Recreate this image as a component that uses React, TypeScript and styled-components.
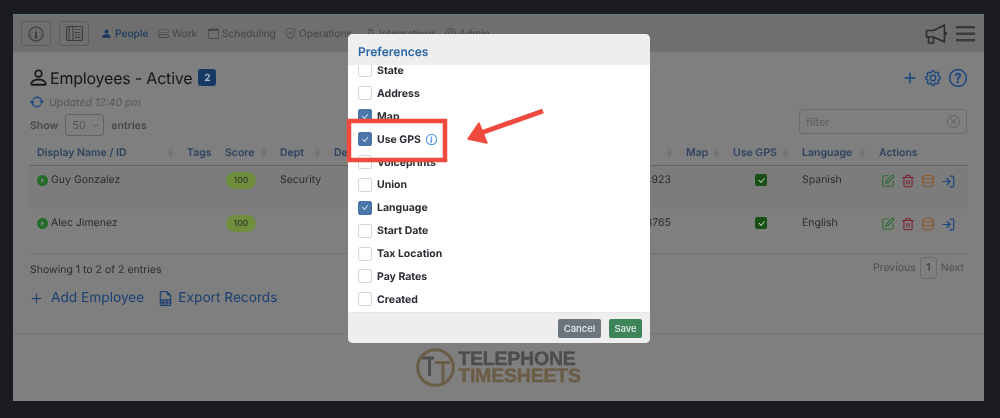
import React from "react";
import styled, { createGlobalStyle } from "styled-components";
import {
  BsPersonFill, BsPerson, BsHddStack, BsCalendar, BsShieldCheck, BsPlug, BsGear, BsArrowRepeat,
  BsPlusLg, BsQuestionCircle, BsPlayCircleFill, BsFileEarmarkSpreadsheet, BsInfoCircle, BsXCircle,
  BsCheck, BsCheckLg, BsChevronDown,
} from "react-icons/bs";
import { SquarePen, Trash2, Database, LogIn } from "lucide-react";

const Global = createGlobalStyle`
  html, body { margin: 0; padding: 0; background: #1b1c1f; }
  body { font-family: Inter, "Liberation Sans", sans-serif; text-rendering: geometricPrecision; }
  * { box-sizing: border-box; }
  #root { filter: blur(0.35px); }
`;

const Screen = styled.div`
  width: 1000px; height: 418px; background: #1b1c1f;
  padding: 14px 16px 17px 13px; overflow: hidden;
`;
const Window = styled.div`
  position: relative; height: 387px; background: #7f7f7f;
  border-top: 1px solid #5f7f7c; display: flex; flex-direction: column;
`;
const TopBar = styled.header`
  height: 37px; flex: none; background: #6f6f6f; display: flex; align-items: center; padding: 0 9px 0 8px;
`;
const SquareButton = styled.button`
  width: 30px; height: 25px; margin-right: 8px; padding: 0; background: transparent;
  border: 1px solid #5c5c5c; border-radius: 3px; color: #3c3c3c;
  display: flex; align-items: center; justify-content: center;
`;
const NavItem = styled.a<{ $active?: boolean; $w: number }>`
  width: ${(p) => p.$w}px; flex: none; display: flex; align-items: center; gap: 3px; white-space: nowrap;
  font-size: 10.2px; color: ${(p) => (p.$active ? "#17395f" : "#444444")}; font-weight: ${(p) => (p.$active ? 500 : 400)};
  svg { font-size: 11px; flex: none; }
`;
const Nav = styled.nav`display: flex; margin-left: 4px;`;
const TopRight = styled.div`
  margin-left: auto; display: flex; align-items: center; gap: 9px; color: #2d2d2d;
`;
const Content = styled.main`
  height: 282px; flex: none; padding: 14px 17px 0; border-bottom: 1px solid #737373;
`;
const Summary = styled.section`display: flex; justify-content: space-between; height: 73px;`;
const SummaryLeft = styled.div`display: flex; flex-direction: column;`;
const SummaryRight = styled.div`display: flex; flex-direction: column; align-items: flex-end; gap: 19px;`;
const TitleRow = styled.div`display: flex; align-items: center; height: 23px; color: #161616; svg { margin-left: -2px; stroke: currentColor; stroke-width: 0.3; }`;
const Title = styled.h1`margin: 0 6px 0 1px; font-size: 16px; font-weight: 400; white-space: nowrap; letter-spacing: -0.2px;`;
const Count = styled.span`
  width: 18px; height: 17px; background: #163a63; color: #aeb8c4; border-radius: 3px;
  font-size: 10px; font-weight: 700; display: flex; align-items: center; justify-content: center;
`;
const Updated = styled.div`
  margin-top: 3px; height: 20px; display: flex; align-items: center; gap: 5px; color: #555;
  font-size: 10.5px; font-style: italic; svg { color: #1a4682; font-size: 14px; stroke: currentColor; stroke-width: 0.4; }
`;
const ShowRow = styled.div`
  margin-top: 2px; height: 22px; display: flex; align-items: center; gap: 7px;
  font-size: 10.5px; font-weight: 600; color: #484848;
`;
const Select = styled.div`
  width: 39px; height: 22px; border: 1px solid #626262; border-radius: 3px; display: flex;
  align-items: center; justify-content: space-between; padding: 0 4px 0 6px; color: #555; font-weight: 400; font-size: 11px;
  svg { font-size: 7px; color: #444; }
`;
const ActionIcons = styled.div`
  height: 24px; display: flex; align-items: center; gap: 8px; color: #1a4682;
  svg { stroke: currentColor; stroke-width: 0.4; }
  svg:first-child { stroke-width: 0.8; }
`;
const Filter = styled.div`
  width: 168px; height: 25px; border: 1px solid #6b6b6b; border-radius: 3px; display: flex;
  align-items: center; justify-content: space-between; padding: 0 6px; font-size: 11px; color: #5c5c5c;
  svg { font-size: 13px; color: #5d5d5d; }
`;
const columns = "150px 38px 55px 54px 293px 59px 47px 69px 77px 95px";
const HeadRow = styled.div`
  display: grid; grid-template-columns: ${columns}; height: 26px; border-bottom: 1px solid #616161; margin-top: 1px;
`;
const HeadCell = styled.div`
  display: flex; align-items: center; justify-content: space-between; padding: 0 7px;
  font-size: 10.5px; font-weight: 600; color: #2c4460; white-space: nowrap; overflow: hidden;
`;
const SortMark = styled.span`
  width: 5px; height: 10px; flex: none; background: #737373;
  clip-path: polygon(50% 0, 100% 40%, 100% 60%, 50% 100%, 0 60%, 0 40%);
`;
const BodyRow = styled.div<{ $striped?: boolean }>`
  display: grid; grid-template-columns: ${columns}; height: 43px; padding-top: 5px;
  background: ${(p) => (p.$striped ? "#7c7c7c" : "transparent")};
`;
const BodyCell = styled.div`
  display: flex; align-items: flex-start; padding: 2px 7px 0; font-size: 10.5px; color: #2b2b2b; white-space: nowrap; line-height: 14px;
`;
const Person = styled(BodyCell)`
  gap: 3px; svg { color: #246c28; font-size: 11px; margin-top: 2px; flex: none; }
`;
const RightCell = styled(BodyCell)`justify-content: flex-end; padding-right: 8px;`;
const CenterCell = styled(BodyCell)`justify-content: center; padding: 3px 0 0 1px;`;
const Pill = styled.span`
  width: 30px; height: 17px; margin: -1px 0 0 1px; border-radius: 9px; background: #6f8f3f; color: #36452a;
  font-size: 8.5px; font-weight: 600; display: flex; align-items: center; justify-content: center;
`;
const GreenCheck = styled.span`
  width: 12px; height: 12px; background: #174f14; border-radius: 2px; color: #cfdacb; font-size: 9px;
  display: flex; align-items: center; justify-content: center;
`;
const RowActions = styled.div`
  display: flex; gap: 5.5px; padding: 3px 0 0 9px;
`;
const ActionIcon = styled.span<{ $color: string }>`color: ${(p) => p.$color}; display: flex; width: 14.5px; justify-content: center;`;
const InfoRow = styled.div`
  height: 32px; border-top: 1px solid #707070; display: flex; align-items: center; justify-content: space-between;
  font-size: 10.5px; color: #2e2e2e; margin-top: 1px; padding-right: 3px;
`;
const Pager = styled.div`
  display: flex; align-items: center; gap: 4px; color: #4f4f4f; font-size: 10.5px; margin-top: -4px;
`;
const PageNum = styled.span`
  width: 17px; height: 22px; border: 1px solid #6b6b6b; border-radius: 3px; display: flex; align-items: center;
  justify-content: center; color: #333;
`;
const Links = styled.div`display: flex; align-items: center; gap: 14px; height: 24px; margin-top: 1px;`;
const BigLink = styled.a<{ $gap: number }>`
  display: flex; align-items: center; gap: ${(p) => p.$gap}px; color: #1a3f73; font-size: 13.7px; white-space: nowrap;
  svg { stroke: currentColor; stroke-width: 0.3; }
`;
const Footer = styled.footer`flex: 1; display: flex; align-items: center; justify-content: center; gap: 3px;`;
const LogoText = styled.div`
  font-family: "Liberation Sans", sans-serif; font-weight: 700; font-size: 19.5px; line-height: 17px;
  letter-spacing: -0.2px; -webkit-text-stroke: 0.4px currentColor;
`;
const LogoTop = styled.div`color: #4d4d4d;`;
const LogoBottom = styled.div`color: #6b5d45;`;

const Modal = styled.div`
  position: absolute; left: 335px; top: 19px; width: 302px; height: 309px; border-radius: 5px;
  background: #fff; display: flex; flex-direction: column; overflow: hidden;
`;
const ModalHead = styled.div`
  height: 31px; flex: none; background: #eeeeee; padding: 3px 10px 0; display: flex; align-items: center;
  color: #2b65a3; font-size: 12px; font-weight: 600;
`;
const ModalBody = styled.div`flex: 1; overflow: hidden; padding-left: 10px;`;
const OptionList = styled.div`margin-top: -6px;`;
const Option = styled.label`
  height: 22.9px; display: flex; align-items: center; gap: 5px; font-size: 10.5px; font-weight: 700; color: #2a2d33;
  svg.info { color: #2f80e0; font-size: 11px; margin-left: 0; stroke: currentColor; stroke-width: 0.3; }
`;
const Box = styled.span<{ $on?: boolean }>`
  width: 14px; height: 14px; flex: none; border-radius: 2px; display: flex; align-items: center; justify-content: center;
  border: 1px solid ${(p) => (p.$on ? "#4a77a8" : "#d3d7df")}; background: ${(p) => (p.$on ? "#4a77a8" : "#fff")};
  color: #c9d8e8; font-size: 13px;
`;
const ModalFoot = styled.div`
  height: 31px; flex: none; background: #eeeeee; border-top: 1px solid #e6e6e6; display: flex; align-items: center;
  justify-content: flex-end; gap: 8px; padding: 0 8px;
`;
const FootButton = styled.button<{ $bg: string; $w: number }>`
  width: ${(p) => p.$w}px; height: 19px; padding: 0; border: 0; border-radius: 2px; background: ${(p) => p.$bg};
  color: #e8ebee; font: 500 9.5px Inter, sans-serif;
`;
const Annotation = styled.svg`position: absolute; left: 0; top: 0; pointer-events: none;`;

const options: [string, boolean][] = [
  ["State", false], ["Address", false], ["Map", true], ["Use GPS", true], ["Voiceprints", false], ["Union", false],
  ["Language", true], ["Start Date", false], ["Tax Location", false], ["Pay Rates", false], ["Created", false],
];

const Gauge = () => (
  <svg width="16" height="16" viewBox="0 0 16 16" fill="none" stroke="currentColor" strokeWidth="1.1" aria-hidden>
    <circle cx="8" cy="8" r="7" />
    <path d="M8 3v1M3.5 6l1 .5M12.5 6l-1 .5M3 9.5h1M12 9.5h1" />
    <path d="M8 5.5v5" strokeWidth="1.6" />
    <circle cx="8" cy="11" r="1" fill="currentColor" />
  </svg>
);
const Layout = () => (
  <svg width="17" height="15" viewBox="0 0 17 15" fill="none" stroke="currentColor" strokeWidth="1.1" aria-hidden>
    <rect x="0.5" y="0.5" width="16" height="14" rx="1.5" />
    <path d="M3 .5v14M7 .5v14" />
    <path d="M9 3.5h2M12.5 3.5h2M9 6.5h5.5M9 9h2M12.5 9h2M9 11.5h5.5" />
  </svg>
);
const Megaphone = () => (
  <svg width="22" height="22" viewBox="0 0 22 22" fill="none" stroke="currentColor" strokeWidth="1.6" strokeLinejoin="round" aria-hidden>
    <path d="M1.5 7.5h7L19.5 2v17l-11-5h-7z" />
    <path d="M3.5 14v6h5v-6" />
    <path d="M21 9v3" />
  </svg>
);
const Hamburger = () => (
  <svg width="19" height="17" viewBox="0 0 19 17" fill="#3a3a3a" aria-hidden>
    <rect y="1" width="19" height="2.4" />
    <rect y="7.5" width="19" height="2.4" />
    <rect y="14" width="19" height="2.4" />
  </svg>
);

const Actions = () => (
  <RowActions>
    <ActionIcon $color="#2a6a2e"><SquarePen size={14} strokeWidth={1.8} /></ActionIcon>
    <ActionIcon $color="#7a1f29"><Trash2 size={14} strokeWidth={1.8} /></ActionIcon>
    <ActionIcon $color="#8a5726"><Database size={14} strokeWidth={1.8} /></ActionIcon>
    <ActionIcon $color="#1a4682"><LogIn size={15} strokeWidth={2} /></ActionIcon>
  </RowActions>
);

const Row = ({ name, dept, phone, lang, striped }: { name: string; dept: string; phone: string; lang: string; striped?: boolean }) => (
  <BodyRow $striped={striped}>
    <Person><BsPlayCircleFill />{name}</Person>
    <BodyCell />
    <BodyCell><Pill>100</Pill></BodyCell>
    <BodyCell>{dept}</BodyCell>
    <BodyCell />
    <RightCell>{phone}</RightCell>
    <BodyCell />
    <CenterCell><GreenCheck><BsCheckLg /></GreenCheck></CenterCell>
    <BodyCell>{lang}</BodyCell>
    <Actions />
  </BodyRow>
);

export default function App() {
  return (
    <Screen>
      <Global />
      <Window>
        <TopBar>
          <SquareButton><Gauge /></SquareButton>
          <SquareButton><Layout /></SquareButton>
          <Nav>
            <NavItem $active $w={57}><BsPersonFill />People</NavItem>
            <NavItem $w={50}><BsHddStack />Work</NavItem>
            <NavItem $w={77}><BsCalendar />Scheduling</NavItem>
            <NavItem $w={80}><BsShieldCheck />Operations</NavItem>
            <NavItem $w={80}><BsPlug />Integrations</NavItem>
            <NavItem $w={50}><BsGear />Admin</NavItem>
          </Nav>
          <TopRight>
            <Megaphone />
            <Hamburger />
          </TopRight>
        </TopBar>
        <Content>
          <Summary>
            <SummaryLeft>
              <TitleRow><BsPerson size={21} /><Title>Employees - Active</Title><Count>2</Count></TitleRow>
              <Updated><BsArrowRepeat />Updated 12:40 pm</Updated>
              <ShowRow>Show<Select>50<BsChevronDown /></Select>entries</ShowRow>
            </SummaryLeft>
            <SummaryRight>
              <ActionIcons>
                <BsPlusLg size={14} />
                <BsGear size={16} />
                <BsQuestionCircle size={18} />
              </ActionIcons>
              <Filter>filter<BsXCircle /></Filter>
            </SummaryRight>
          </Summary>
          <HeadRow>
            <HeadCell>Display Name / ID<SortMark /></HeadCell>
            <HeadCell>Tags</HeadCell>
            <HeadCell>Score<SortMark /></HeadCell>
            <HeadCell>Dept<SortMark /></HeadCell>
            <HeadCell>Description<SortMark /></HeadCell>
            <HeadCell><span /><SortMark /></HeadCell>
            <HeadCell>Map<SortMark /></HeadCell>
            <HeadCell>Use GPS<SortMark /></HeadCell>
            <HeadCell>Language<SortMark /></HeadCell>
            <HeadCell>Actions</HeadCell>
          </HeadRow>
          <Row striped name="Guy Gonzalez" dept="Security" phone="4923" lang="Spanish" />
          <Row name="Alec Jimenez" dept="" phone="8765" lang="English" />
          <InfoRow>
            <span>Showing 1 to 2 of 2 entries</span>
            <Pager>Previous<PageNum>1</PageNum>Next</Pager>
          </InfoRow>
          <Links>
            <BigLink $gap={8}><BsPlusLg size={13} />Add Employee</BigLink>
            <BigLink $gap={5}><BsFileEarmarkSpreadsheet size={15} />Export Records</BigLink>
          </Links>
        </Content>
        <Footer>
          <svg width="39" height="39" viewBox="0 0 39 39" fill="none" aria-hidden>
            <circle cx="19.5" cy="19.5" r="17.8" stroke="#6b5d45" strokeWidth="3" />
            <path d="M6 10h12M13.5 10v18" stroke="#4d4d4d" strokeWidth="3" />
            <path d="M19 14.5h15M27 14.5v20" stroke="#6b5d45" strokeWidth="3" />
          </svg>
          <LogoText>
            <LogoTop>TELEPHONE</LogoTop>
            <LogoBottom>TIMESHEETS</LogoBottom>
          </LogoText>
        </Footer>
        <Modal>
          <ModalHead>Preferences</ModalHead>
          <ModalBody>
            <OptionList>
              {options.map(([label, on]) => (
                <Option key={label}>
                  <Box $on={on}>{on && <BsCheck />}</Box>
                  {label}
                  {label === "Use GPS" && <BsInfoCircle className="info" />}
                </Option>
              ))}
            </OptionList>
          </ModalBody>
          <ModalFoot>
            <FootButton $bg="#6c757d" $w={43}>Cancel</FootButton>
            <FootButton $bg="#3d8558" $w={33}>Save</FootButton>
          </ModalFoot>
        </Modal>
        <Annotation width="971" height="386" viewBox="13 15 971 386" aria-hidden>
          <rect x="349" y="121" width="96" height="39" fill="none" stroke="#ef4a3d" strokeWidth="4.5" />
          <path d="M543 111L478 134" stroke="#ef4a3d" strokeWidth="5" />
          <path d="M468 139L479 123L487 143Z" fill="#ef4a3d" stroke="#ef4a3d" strokeWidth="1.5" strokeLinejoin="round" />
        </Annotation>
      </Window>
    </Screen>
  );
}
